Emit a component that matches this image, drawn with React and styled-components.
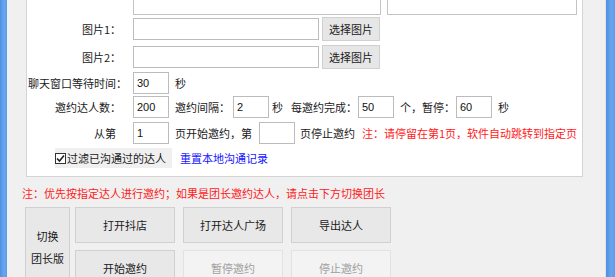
import React from "react";
import styled, { createGlobalStyle } from "styled-components";

const GlobalStyle = createGlobalStyle`
  html, body {
    margin: 0;
    padding: 0;
    background: #f0f0f0;
  }
  body {
    font-family: "Noto Sans CJK SC", "Liberation Sans", sans-serif;
    font-size: 11px;
    color: #1a1a1a;
  }
`;

const App = () => {
  return (
    <>
      <GlobalStyle />
      <Window>
        <EdgeBar $w={7} />
        <Main>
          <Panel>
            <TopRow>
              <Area $ml={106} $w={248} />
              <Area $ml={6} $w={190} />
            </TopRow>

            <Row $mt={3}>
              <Label $pr={6}>图片1：</Label>
              <Input $ml={6} $w={186} />
              <SmallButton $ml={3}>选择图片</SmallButton>
            </Row>
            <Row $mt={6}>
              <Label $pr={6}>图片2：</Label>
              <Input $ml={6} $w={186} />
              <SmallButton $ml={3}>选择图片</SmallButton>
            </Row>
            <Row $mt={4}>
              <Label $pr={0}>聊天窗口等待时间：</Label>
              <Input $ml={6} $w={36}>30</Input>
              <Text $ml={6}>秒</Text>
            </Row>
            <Row $mt={2}>
              <Label $pr={6}>邀约达人数：</Label>
              <Input $ml={6} $w={36}>200</Input>
              <Text $ml={6}>邀约间隔：</Text>
              <Input $ml={3} $w={36}>2</Input>
              <Text $ml={3}>秒</Text>
              <Text $ml={8}>每邀约完成：</Text>
              <Input $ml={1} $w={36}>50</Input>
              <Text $ml={6}>个，暂停：</Text>
              <Input $ml={1} $w={36}>60</Input>
              <Text $ml={6}>秒</Text>
            </Row>
            <Row $mt={4}>
              <Label $pr={11}>从第</Label>
              <Input $ml={6} $w={36}>1</Input>
              <Text $ml={6}>页开始邀约，第</Text>
              <Input $ml={7} $w={36} />
              <Text $ml={5}>页停止邀约</Text>
              <Text $ml={7} $red>注：请停留在第1页，软件自动跳转到指定页</Text>
            </Row>
            <CheckRow>
              <CheckLabel>
                <CheckBox>
                  <svg width="9" height="9" viewBox="0 0 9 9">
                    <path d="M1 4.5 L3.5 7 L8 1.5" fill="none" stroke="#222" strokeWidth="1.6" />
                  </svg>
                </CheckBox>
                过滤已沟通过的达人
              </CheckLabel>
              <Link>重置本地沟通记录</Link>
            </CheckRow>
          </Panel>

          <Note>注：优先按指定达人进行邀约；如果是团长邀约达人，请点击下方切换团长</Note>

          <Actions>
            <SwitchButton>
              <span>切换</span>
              <span>团长版</span>
            </SwitchButton>
            <ButtonGrid>
              <ActionButton>打开抖店</ActionButton>
              <ActionButton>打开达人广场</ActionButton>
              <ActionButton>导出达人</ActionButton>
              <ActionButton>开始邀约</ActionButton>
              <ActionButton $disabled>暂停邀约</ActionButton>
              <ActionButton $disabled>停止邀约</ActionButton>
            </ButtonGrid>
          </Actions>
        </Main>
        <RightGap />
        <EdgeBar $w={9} />
      </Window>
    </>
  );
};

export default App;

// Styled Components
const Window = styled.div`
  display: flex;
  width: 615px;
  height: 277px;
  overflow: hidden;
  background: #f0f0f0;
`;

const EdgeBar = styled.div`
  width: ${(p) => p.$w}px;
  flex-shrink: 0;
  background: linear-gradient(to right, #4f8fe2, #6aa6ee 60%, #5c9bea);
`;

const Main = styled.div`
  flex: 1;
  display: flex;
  flex-direction: column;
  padding-left: 15px;
  min-width: 0;
`;

const RightGap = styled.div`
  width: 23px;
  flex-shrink: 0;
  border-right: 1px solid #e2e2e2;
`;

const Panel = styled.div`
  width: 555px;
  margin-left: 4px;
  margin-top: -20px;
  background: #fff;
  border: 1px solid #d4d4d4;
  padding-bottom: 8px;
`;

const TopRow = styled.div`
  display: flex;
  height: 34px;
`;

const Area = styled.div`
  margin-left: ${(p) => p.$ml}px;
  width: ${(p) => p.$w}px;
  height: 100%;
  box-sizing: border-box;
  border: 1px solid #c4c4c4;
  background: #fff;
`;

const Row = styled.div`
  display: flex;
  align-items: center;
  height: 22px;
  margin-top: ${(p) => p.$mt}px;
  white-space: nowrap;
`;

const Label = styled.div`
  width: 100px;
  flex-shrink: 0;
  box-sizing: border-box;
  text-align: right;
  padding-right: ${(p) => p.$pr}px;
  line-height: 22px;
`;

const Text = styled.span`
  margin-left: ${(p) => p.$ml}px;
  color: ${(p) => (p.$red ? "#ff1a1a" : "#1a1a1a")};
  line-height: 22px;
`;

const Input = styled.div`
  margin-left: ${(p) => p.$ml}px;
  width: ${(p) => p.$w}px;
  height: 22px;
  flex-shrink: 0;
  box-sizing: border-box;
  border: 1px solid #bcbcbc;
  background: #fff;
  padding-left: 3px;
  font-family: "Liberation Sans", "DejaVu Sans", sans-serif;
  font-size: 11px;
  line-height: 20px;
  color: #111;
`;

const SmallButton = styled.div`
  margin-left: ${(p) => p.$ml}px;
  width: 58px;
  height: 24px;
  box-sizing: border-box;
  border: 1px solid #d0d0d0;
  background: #e6e6e6;
  display: flex;
  align-items: center;
  justify-content: center;
`;

const CheckRow = styled.div`
  display: flex;
  align-items: center;
  height: 20px;
  margin-top: 4px;
`;

const CheckLabel = styled.div`
  margin-left: 28px;
  height: 20px;
  display: flex;
  align-items: center;
  gap: 1px;
  padding-right: 6px;
  background: #f0f0f0;
`;

const CheckBox = styled.span`
  width: 11px;
  height: 11px;
  box-sizing: border-box;
  border: 1px solid #333;
  background: #fff;
  display: flex;
  align-items: center;
  justify-content: center;
`;

const Link = styled.span`
  margin-left: 8px;
  color: #1515ff;
`;

const Note = styled.div`
  margin-top: 8px;
  line-height: 16px;
  color: #ff1a1a;
  white-space: nowrap;
`;

const Actions = styled.div`
  display: flex;
  margin-top: 6px;
  margin-left: 3px;
`;

const SwitchButton = styled.div`
  width: 45px;
  height: 79px;
  box-sizing: border-box;
  border: 1px solid #d0d0d0;
  background: #e8e8e8;
  display: flex;
  flex-direction: column;
  align-items: center;
  justify-content: center;
  line-height: 22px;
`;

const ButtonGrid = styled.div`
  margin-left: 5px;
  display: grid;
  grid-template-columns: repeat(3, 100px);
  grid-auto-rows: 36px;
  column-gap: 8px;
  row-gap: 7px;
`;

const ActionButton = styled.div`
  box-sizing: border-box;
  border: 1px solid ${(p) => (p.$disabled ? "#e2e2e2" : "#d0d0d0")};
  background: ${(p) => (p.$disabled ? "#f3f3f3" : "#e8e8e8")};
  color: ${(p) => (p.$disabled ? "#a0a0a0" : "#1a1a1a")};
  display: flex;
  align-items: center;
  justify-content: center;
`;
